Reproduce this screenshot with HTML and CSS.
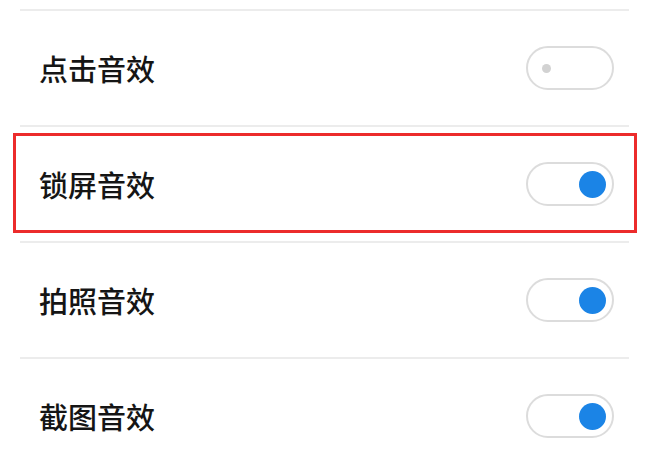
FILE: index.html
```html
<!DOCTYPE html>
<html lang="zh-CN">
<head>
<meta charset="utf-8">
<title>音效设置</title>
<link rel="stylesheet" href="styles.css">
</head>
<body>
<div class="list">
  <div class="top-spacer"></div>
  <div class="row">
    <span class="label">点击音效</span>
    <span class="toggle off"><span class="dot"></span></span>
  </div>
  <div class="row highlighted">
    <span class="highlight"></span>
    <span class="label">锁屏音效</span>
    <span class="toggle on"><span class="knob"></span></span>
  </div>
  <div class="row">
    <span class="label">拍照音效</span>
    <span class="toggle on"><span class="knob"></span></span>
  </div>
  <div class="row">
    <span class="label">截图音效</span>
    <span class="toggle on"><span class="knob"></span></span>
  </div>
</div>
</body>
</html>
```

FILE: styles.css
```css
html, body {
  margin: 0;
  padding: 0;
  background: #ffffff;
  overflow: hidden;
}

body {
  width: 650px;
  height: 455px;
  font-family: "Noto Sans CJK SC", "Noto Sans", sans-serif;
}

.list {
  display: flex;
  flex-direction: column;
  padding: 0 21px 0 20px;
}

.top-spacer {
  height: 9px;
}

.row {
  position: relative;
  box-sizing: border-box;
  height: 116px;
  flex: none;
  border-top: 2px solid #ececec;
  display: flex;
  align-items: center;
  justify-content: space-between;
  padding: 0 15px 0 19px;
}

.label {
  font-size: 29px;
  font-weight: 500;
  color: #151515;
  letter-spacing: 0;
  line-height: 1;
}

.toggle {
  box-sizing: border-box;
  width: 88px;
  height: 44px;
  border: 2px solid #dcdcdc;
  border-radius: 22px;
  background: #fff;
  display: flex;
  align-items: center;
}

.toggle.on {
  justify-content: flex-end;
  padding-right: 6px;
}

.toggle.off {
  justify-content: flex-start;
  padding-left: 14px;
}

.knob {
  width: 27px;
  height: 27px;
  border-radius: 50%;
  background: #1b84e6;
}

.dot {
  width: 9px;
  height: 9px;
  border-radius: 50%;
  background: #d2d2d2;
}

.highlight {
  position: absolute;
  left: -7px;
  right: -8px;
  top: 6px;
  bottom: 8px;
  border: 3px solid #ec2b2b;
  pointer-events: none;
}
```
